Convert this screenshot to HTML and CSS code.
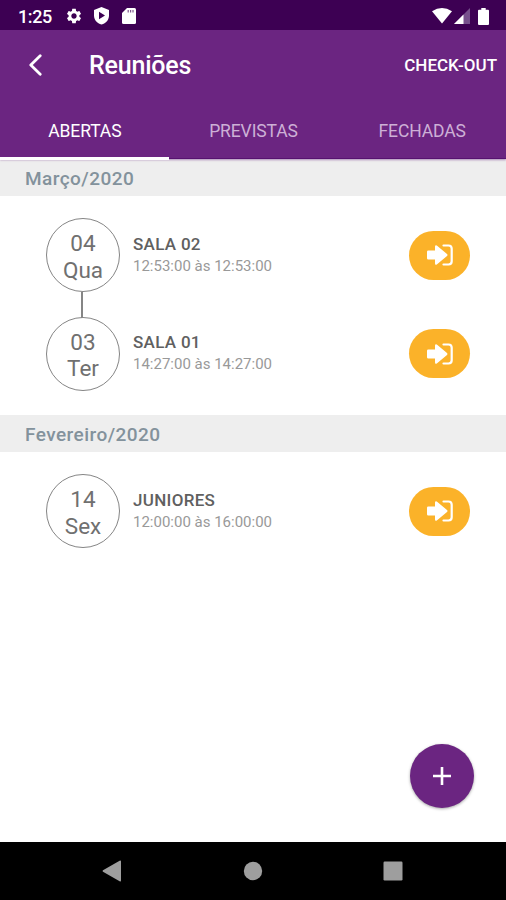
FILE: index.html
```html
<!DOCTYPE html>
<html lang="pt-BR">
<head>
    <meta charset="UTF-8">
    <meta name="viewport" content="width=device-width, initial-scale=1">
    <link rel="stylesheet" href="styles.css">
    <title>Reuniões</title>
</head>
<body>
    <svg class="sprite" aria-hidden="true">
        <symbol id="icon-enter" viewBox="0 0 26 22">
            <path fill="currentColor" d="M0 7.8Q0 6.5 1.3 6.5H8V2.7Q8 .4 9.8 1.5L20 10Q21 11 20 12L9.8 20.5Q8 21.6 8 19.3V15.5H1.3Q0 15.5 0 14.2Z"/>
            <path fill="none" stroke="currentColor" stroke-width="2.2" stroke-linecap="round" d="M16.5 1.5H21.5Q24.7 1.5 24.7 4.7V17.3Q24.7 20.5 21.5 20.5H16.5"/>
        </symbol>
    </svg>
    <header class="top">
        <div class="status">
            <span class="clock">1:25</span>
            <svg class="gear" width="18" height="18" viewBox="0 0 24 24"><path fill="#fff" d="M19.14 12.94c.04-.3.06-.61.06-.94s-.02-.64-.07-.94l2.03-1.58c.18-.14.23-.41.12-.61l-1.92-3.32c-.12-.22-.37-.29-.59-.22l-2.39.96c-.5-.38-1.03-.7-1.62-.94l-.36-2.54c-.04-.24-.24-.41-.48-.41h-3.84c-.24 0-.43.17-.47.41l-.36 2.54c-.59.24-1.13.57-1.62.94l-2.39-.96c-.22-.08-.47 0-.59.22L2.74 8.87c-.12.21-.08.47.12.61l2.03 1.58c-.05.3-.09.63-.09.94s.02.64.07.94l-2.03 1.58c-.18.14-.23.41-.12.61l1.92 3.32c.12.22.37.29.59.22l2.39-.96c.5.38 1.03.7 1.62.94l.36 2.54c.05.24.24.41.48.41h3.84c.24 0 .44-.17.47-.41l.36-2.54c.59-.24 1.13-.56 1.62-.94l2.39.96c.22.08.47 0 .59-.22l1.92-3.32c.12-.22.07-.47-.12-.61l-2.01-1.58zM12 15.6c-1.98 0-3.6-1.62-3.6-3.6s1.62-3.6 3.6-3.6 3.6 1.62 3.6 3.6-1.62 3.6-3.6 3.6z"/></svg>
            <svg class="shield" width="15" height="18" viewBox="0 0 15 18"><path fill="#fff" d="M7.5 0L15 3V8.2C15 12.8 12 16.2 7.5 17.6C3 16.2 0 12.8 0 8.2V3Z"/><path fill="#3d0053" d="M5 4.8L11 8.5L5 12.2Z"/></svg>
            <svg class="card" width="14" height="16" viewBox="0 0 14 16"><path fill="#fff" d="M5 0H12.5Q14 0 14 1.5V14.5Q14 16 12.5 16H1.5Q0 16 0 14.5V5Z"/><path stroke="#3d0053" stroke-width="1.2" opacity=".65" d="M6.2 2V4.6M8.6 2V4.6M11 2V4.6"/></svg>
            <svg class="wifi" width="20" height="16" viewBox="0 0 20 16"><path fill="#fff" d="M0 3.2Q10-3.2 20 3.2L10 15.6Z"/></svg>
            <svg class="signal" width="16" height="16" viewBox="0 0 16 16"><path fill="#77508c" d="M16 0V16H0Z"/><path fill="#fff" d="M9.5 6.5V16H0Z"/></svg>
            <svg class="battery" width="11" height="17" viewBox="0 0 11 17"><path fill="#fff" d="M3.3 0H7.7V1.7H10Q11 1.7 11 2.7V16Q11 17 10 17H1Q0 17 0 16V2.7Q0 1.7 1 1.7H3.3Z"/></svg>
        </div>
        <div class="toolbar">
            <svg class="back" width="13" height="22" viewBox="0 0 13 22"><path fill="none" stroke="#fff" stroke-width="2.8" stroke-linecap="round" stroke-linejoin="round" d="M11.2 1.8L1.8 11L11.2 20.2"/></svg>
            <h1>Reuniões</h1>
            <a class="checkout">CHECK-OUT</a>
        </div>
        <nav class="tabs">
            <a class="tab active">ABERTAS</a>
            <a class="tab">PREVISTAS</a>
            <a class="tab">FECHADAS</a>
        </nav>
    </header>
    <main>
        <section>
            <h2>Março/2020</h2>
            <ul class="meetings">
                <li class="meeting">
                    <div class="date"><span>04</span><span>Qua</span></div>
                    <div class="info">
                        <h3>SALA 02</h3>
                        <p>12:53:00 às 12:53:00</p>
                    </div>
                    <button class="enter" aria-label="Entrar"><svg width="26" height="22"><use href="#icon-enter"/></svg></button>
                </li>
                <li class="meeting">
                    <div class="date"><span>03</span><span>Ter</span></div>
                    <div class="info">
                        <h3>SALA 01</h3>
                        <p>14:27:00 às 14:27:00</p>
                    </div>
                    <button class="enter" aria-label="Entrar"><svg width="26" height="22"><use href="#icon-enter"/></svg></button>
                </li>
            </ul>
        </section>
        <section>
            <h2>Fevereiro/2020</h2>
            <ul class="meetings">
                <li class="meeting">
                    <div class="date"><span>14</span><span>Sex</span></div>
                    <div class="info">
                        <h3>JUNIORES</h3>
                        <p>12:00:00 às 16:00:00</p>
                    </div>
                    <button class="enter" aria-label="Entrar"><svg width="26" height="22"><use href="#icon-enter"/></svg></button>
                </li>
            </ul>
        </section>
        <button class="add" aria-label="Adicionar"><svg width="18" height="18" viewBox="0 0 18 18"><path stroke="#fff" stroke-width="2.6" d="M9 0V18M0 9H18"/></svg></button>
    </main>
    <footer class="navbar">
        <svg width="20" height="22" viewBox="0 0 20 22"><path fill="#9e9e9e" d="M17.6.8Q19 0 19 1.6V20.4Q19 22 17.6 21.2L1 11.8Q0 11 1 10.2Z"/></svg>
        <svg width="20" height="20" viewBox="0 0 20 20"><circle cx="10" cy="10" r="9.2" fill="#9e9e9e"/></svg>
        <svg width="20" height="20" viewBox="0 0 20 20"><rect x=".5" y=".5" width="19" height="19" rx="1.2" fill="#9e9e9e"/></svg>
    </footer>
</body>
</html>
```
FILE: styles.css
```css
* {
  box-sizing: border-box;
  margin: 0;
  padding: 0;
}

body {
  display: flex;
  flex-direction: column;
  height: 900px;
  overflow: hidden;
  font-family: Roboto, "Liberation Sans", sans-serif;
  background: #fff;
}

.sprite {
  display: none;
}

.top {
  height: 159px;
  color: #fff;
  background: #6b2581;
  border-bottom: 1px solid #571270;
  box-shadow: 0 1px 2px rgba(107, 37, 129, 0.5);
  z-index: 1;
}

.status {
  display: flex;
  align-items: center;
  height: 30px;
  padding: 2px 17px 0 18px;
  background: #3d0053;
}

.clock {
  width: 47px;
  font-size: 18px;
  font-weight: 500;
  letter-spacing: -0.4px;
}

.shield {
  margin-left: 11px;
}

.card {
  margin-left: 13px;
}

.wifi {
  margin-left: auto;
}

.signal {
  margin-left: 2px;
}

.battery {
  margin-left: 8px;
}

.toolbar {
  display: flex;
  align-items: center;
  height: 70px;
  padding: 0 9px 0 29px;
}

.toolbar h1 {
  margin-left: 47px;
  font-size: 25px;
  font-weight: 500;
  letter-spacing: -0.2px;
}

.checkout {
  margin-left: auto;
  font-size: 17px;
  font-weight: 500;
}

.tabs {
  display: flex;
  height: 60px;
}

.tab {
  flex: 1;
  padding-top: 3px;
  border-bottom: 3px solid transparent;
  font-size: 17.5px;
  line-height: 56px;
  letter-spacing: -0.1px;
  text-align: center;
  text-indent: 1px;
  color: #cdb0d6;
}

.tab.active {
  color: #fff;
  border-color: #fff;
}

main {
  flex: 1;
}

h2 {
  height: 37px;
  padding-left: 25px;
  font-size: 19px;
  font-weight: 500;
  line-height: 40px;
  letter-spacing: 0.45px;
  color: #83929c;
  background: #eee;
}

.meetings {
  padding: 22px 36px 24.5px 46px;
  list-style: none;
}

.meeting {
  display: flex;
  align-items: center;
}

.meeting + .meeting {
  margin-top: 24.5px;
}

.date {
  position: relative;
  display: flex;
  flex-direction: column;
  align-items: center;
  width: 74px;
  height: 74px;
  padding-top: 11px;
  border: 1px solid #858585;
  border-radius: 50%;
  font-size: 22.5px;
  line-height: 26.5px;
  color: #707070;
}

/* line joining a date to the one above it */
.meeting + .meeting .date::before {
  content: "";
  position: absolute;
  bottom: 100%;
  left: 34px;
  width: 2px;
  height: 26px;
  background: #858585;
}

.info {
  flex: 1;
  padding: 0 0 1px 13px;
}

.info h3 {
  font-size: 17px;
  font-weight: 500;
  line-height: 22px;
  letter-spacing: 0.3px;
  color: #606060;
}

.info p {
  font-size: 15px;
  line-height: 22px;
  color: #999;
}

button {
  display: flex;
  align-items: center;
  justify-content: center;
  border: none;
  color: #fff;
}

.enter {
  width: 61px;
  height: 49px;
  border-radius: 25px;
  background: #fbb229;
}

.add {
  position: absolute;
  top: 744px;
  left: 410px;
  width: 64px;
  height: 64px;
  border-radius: 50%;
  background: #6b2581;
  box-shadow: 0 1px 3px rgba(0, 0, 0, 0.35);
}

.navbar {
  display: flex;
  align-items: center;
  justify-content: space-between;
  height: 58px;
  padding: 0 103px 0 102px;
  background: #000;
}
```
